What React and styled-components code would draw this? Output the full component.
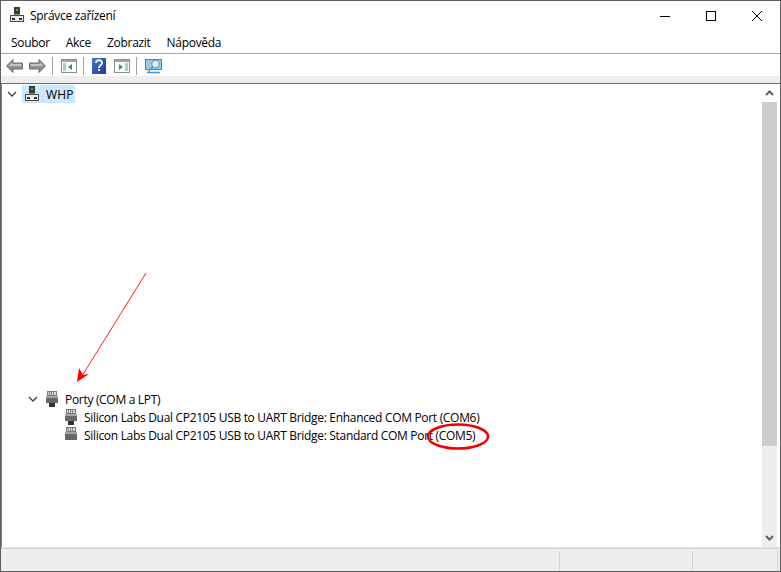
import React from "react";
import styled, { createGlobalStyle } from "styled-components";

const Global = createGlobalStyle`
  html, body { margin: 0; padding: 0; background: #fff; overflow: hidden; }
  #root { width: 781px; height: 572px; }
`;
const Frame = styled.div`
  position: relative; width: 781px; height: 572px; box-sizing: border-box;
  border: 1px solid #5f5f5f; background: #fff;
  display: flex; flex-direction: column; overflow: hidden;
  font-family: "Open Sans", "Noto Sans", sans-serif; color: #000;
  font-size: 12px; letter-spacing: -0.31px;
`;
const TitleBar = styled.div`
  height: 30px; flex: none; display: flex; align-items: center; padding-left: 9px; gap: 6px;
`;
const TitleIcon = styled.div`display: flex; position: relative; top: -1px;`;
const TitleText = styled.span`flex: 1; font-size: 12px; letter-spacing: -0.3px; position: relative; top: -1px;`;
const WinButtons = styled.div`display: flex; height: 30px; margin-right: 0;`;
const WinButton = styled.div`
  width: 46px; height: 30px; display: flex; align-items: center; justify-content: center;
`;
const MenuBar = styled.div`
  height: 22px; flex: none; display: flex; align-items: center; padding-left: 10px; gap: 16px;
  border-bottom: 1px solid #a6a6ae; font-size: 12px; letter-spacing: -0.3px;
`;
const Toolbar = styled.div`
  height: 22px; flex: none; box-sizing: border-box; display: flex; align-items: center; padding: 2px 0 0 5px;
`;
const Sep = styled.div`width: 1px; height: 18px; background: #a0a0a0; margin: 0 8px 0 6px;`;
const Tool = styled.div`display: flex; margin-right: ${p => p.$mr ?? 0}px;`;
const Strip = styled.div`
  height: 7px; flex: none; background: #eeeeee; border-bottom: 1px solid #6a6a6a;
`;
const Main = styled.div`
  flex: 1; display: flex; min-height: 0; padding-right: 3px; border-left: 1px solid #808080;
`;
const Tree = styled.div`flex: 1; min-width: 0; padding-top: 1px;`;
const Row = styled.div`
  height: 18px; display: flex; align-items: center; margin-left: ${p => p.$indent}px;
`;
const Chevron = styled.div`width: 16px; display: flex; justify-content: center; flex: none; margin-right: ${p => p.$mr ?? 3}px;`;
const Selected = styled.div`
  display: flex; align-items: center; height: 18px; background: #cce8ff; padding: 0 2px 0 3px; gap: 7px;
  letter-spacing: 0.1px;
`;
const Label = styled.span`white-space: nowrap; margin-left: 7px;`;
const Group = styled.div`margin-top: 287px;`;
const ScrollBar = styled.div`
  width: 15px; flex: none; background: #eeeeee; display: flex; flex-direction: column;
`;
const Arrow = styled.div`height: 18px; display: flex; align-items: center; justify-content: center; flex: none; background: ${p => p.$bg || "transparent"};`;
const Thumb = styled.div`height: 344px; background: #cdcdcd; flex: none;`;
const Fill = styled.div`flex: 1;`;
const StatusBar = styled.div`
  height: 23px; flex: none; box-sizing: border-box; display: flex; background: #eeeeee;
  border-top: 1px solid #d0d0d0; margin-top: 1px; box-shadow: 0 -1px 0 #e6e6e6; padding-top: 2px; padding-right: 2px;
`;
const StatusCell = styled.div`
  width: ${p => p.$w}px; flex: ${p => p.$grow ? 1 : "none"}; border-right: 1px solid #d4d4d4; box-sizing: border-box;
`;
const Overlay = styled.svg`position: absolute; left: 0; top: 0; pointer-events: none;`;

const DeviceIcon = () => (
  <svg width="14" height="16" viewBox="0 0 14 16">
    <rect x="4" y="0" width="6" height="8" fill="#3a3a3a" />
    <rect x="6" y="2" width="2" height="2" fill="#30c060" />
    <path d="M4 7h6l1 2H3z" fill="#8f8f8f" />
    <rect x="0.500" y="8.500" width="13" height="6" fill="#ececec" stroke="#4a4a4a" />
    <rect x="2" y="11" width="3" height="2" fill="#333" />
    <rect x="9" y="11" width="3" height="2" fill="#333" />
  </svg>
);
const PortIcon = ({ plug }) => (
  <svg width="12" height="16" viewBox="0 0 12 16">
    <rect x="1.500" y="0.500" width="9" height="4" fill="#d8d8d8" stroke="#7a7a7a" />
    <path d="M3.500 1v3M5.500 1v3M7.500 1v3" stroke="#8a8a8a" />
    <rect x="0" y="5" width="12" height={plug ? 7 : 8} fill="#686868" />
    <rect x="0" y="5" width="12" height="2" fill="#a4a4a4" />
    {plug && <rect x="3" y="12" width="6" height="4" fill="#333" />}
  </svg>
);
const NavArrow = ({ flip }) => (
  <svg width="17" height="14" viewBox="0 0 17 14" style={flip ? { transform: "scaleX(-1)" } : undefined}>
    <path d="M0.500 7L7 0.500V4h9.500v6H7v3.500z" fill="#8f8f8f" stroke="#6d6d6d" />
    <path d="M2.500 7L6 3.500V5h9.500v2z" fill="#c4c4c4" />
  </svg>
);
const PanelIcon = ({ right }) => (
  <svg width="16" height="14" viewBox="0 0 16 14">
    <rect x="0.500" y="0.500" width="15" height="13" fill="#fafcfd" stroke="#8a8f94" />
    <rect x="1" y="1" width="14" height="2" fill="#9aa5ad" />
    <path d={right
      ? "M11 5h3M11 7h3M11 9h3M11 11h3"
      : "M2 5h3M2 7h3M2 9h3M2 11h3"} stroke="#6f8ea3" />
    <path d={right ? "M5 5l4 3-4 3z" : "M11 5l-4 3 4 3z"} fill="#2ea043" />
  </svg>
);
const HelpIcon = () => (
  <svg width="14" height="16" viewBox="0 0 14 16">
    <defs><linearGradient id="hb" x1="0" y1="0" x2="1" y2="1"><stop offset="0" stopColor="#4a74cf" /><stop offset="1" stopColor="#1f3a98" /></linearGradient></defs>
    <rect x="0" y="0" width="14" height="16" fill="url(#hb)" />
    <path d="M4 5c0-3.500 6-3.500 6-.3 0 2.800-3 2.500-3 5.300" fill="none" stroke="#f0f4ff" strokeWidth="2" />
    <rect x="6" y="11" width="2" height="2" fill="#f0f4ff" />
  </svg>
);
const MonitorIcon = () => (
  <svg width="17" height="15" viewBox="0 0 17 15">
    <rect x="0.500" y="0.500" width="16" height="10" fill="#8ecdf0" stroke="#2f8fc8" />
    <path d="M2 13.500h13" stroke="#3c9bd0" strokeWidth="1.500" />
    <circle cx="10.500" cy="5" r="3.800" fill="#d9eff9" stroke="#7d8a92" />
    <path d="M7.500 8l-4 4.500" stroke="#8a8a8a" strokeWidth="1.800" />
  </svg>
);
const Down = () => (
  <svg width="10" height="6" viewBox="0 0 10 6"><path d="M1 1l4 4 4-4" fill="none" stroke="#404040" strokeWidth="1.300" /></svg>
);

export default function App() {
  return (
    <>
      <Global />
      <Frame>
        <TitleBar>
          <TitleIcon><DeviceIcon /></TitleIcon>
          <TitleText>Správce zařízení</TitleText>
          <WinButtons>
            <WinButton><svg width="10" height="10"><path d="M0 5.500h10" stroke="#000" /></svg></WinButton>
            <WinButton><svg width="10" height="10"><rect x="0.500" y="0.500" width="9" height="9" fill="none" stroke="#000" /></svg></WinButton>
            <WinButton><svg width="10" height="10"><path d="M0 0l10 10M10 0L0 10" stroke="#000" /></svg></WinButton>
          </WinButtons>
        </TitleBar>
        <MenuBar>
          <span>Soubor</span><span>Akce</span><span>Zobrazit</span><span>Nápověda</span>
        </MenuBar>
        <Toolbar>
          <Tool $mr={6}><NavArrow /></Tool>
          <Tool><NavArrow flip /></Tool>
          <Sep />
          <Tool><PanelIcon /></Tool>
          <Sep />
          <Tool $mr={8}><HelpIcon /></Tool>
          <Tool><PanelIcon right /></Tool>
          <Sep />
          <Tool><MonitorIcon /></Tool>
        </Toolbar>
        <Strip />
        <Main>
          <Tree>
            <Row $indent={2}>
              <Chevron $mr={2}><Down /></Chevron>
              <Selected><DeviceIcon /><span>WHP</span></Selected>
            </Row>
            <Group>
              <Row $indent={23}>
                <Chevron $mr={5}><Down /></Chevron>
                <PortIcon plug /><Label>Porty (COM a LPT)</Label>
              </Row>
              <Row $indent={63}><PortIcon plug /><Label>Silicon Labs Dual CP2105 USB to UART Bridge: Enhanced COM Port (COM6)</Label></Row>
              <Row $indent={63}><PortIcon /><Label>Silicon Labs Dual CP2105 USB to UART Bridge: Standard COM Port (COM5)</Label></Row>
            </Group>
          </Tree>
          <ScrollBar>
            <Arrow $bg="#fff"><svg width="9" height="6"><path d="M1 5l3.500-3.500L8 5" fill="none" stroke="#606060" strokeWidth="2" /></svg></Arrow>
            <Thumb />
            <Fill />
            <Arrow><svg width="9" height="6"><path d="M1 1l3.500 3.500L8 1" fill="none" stroke="#606060" strokeWidth="2" /></svg></Arrow>
          </ScrollBar>
        </Main>
        <StatusBar>
          <StatusCell $grow />
          <StatusCell $w={133} />
          <StatusCell $w={85} />
        </StatusBar>
        <Overlay width="779" height="570" viewBox="1 1 779 570">
          <path d="M146 273L82 376" stroke="#ff2020" strokeWidth="1" fill="none" />
          <path d="M77 382L79 368L83 375L89 374z" fill="#ff0000" />
          <ellipse cx="458" cy="436.500" rx="30" ry="12" fill="none" stroke="#ee0000" strokeWidth="2.500" />
        </Overlay>
      </Frame>
    </>
  );
}
